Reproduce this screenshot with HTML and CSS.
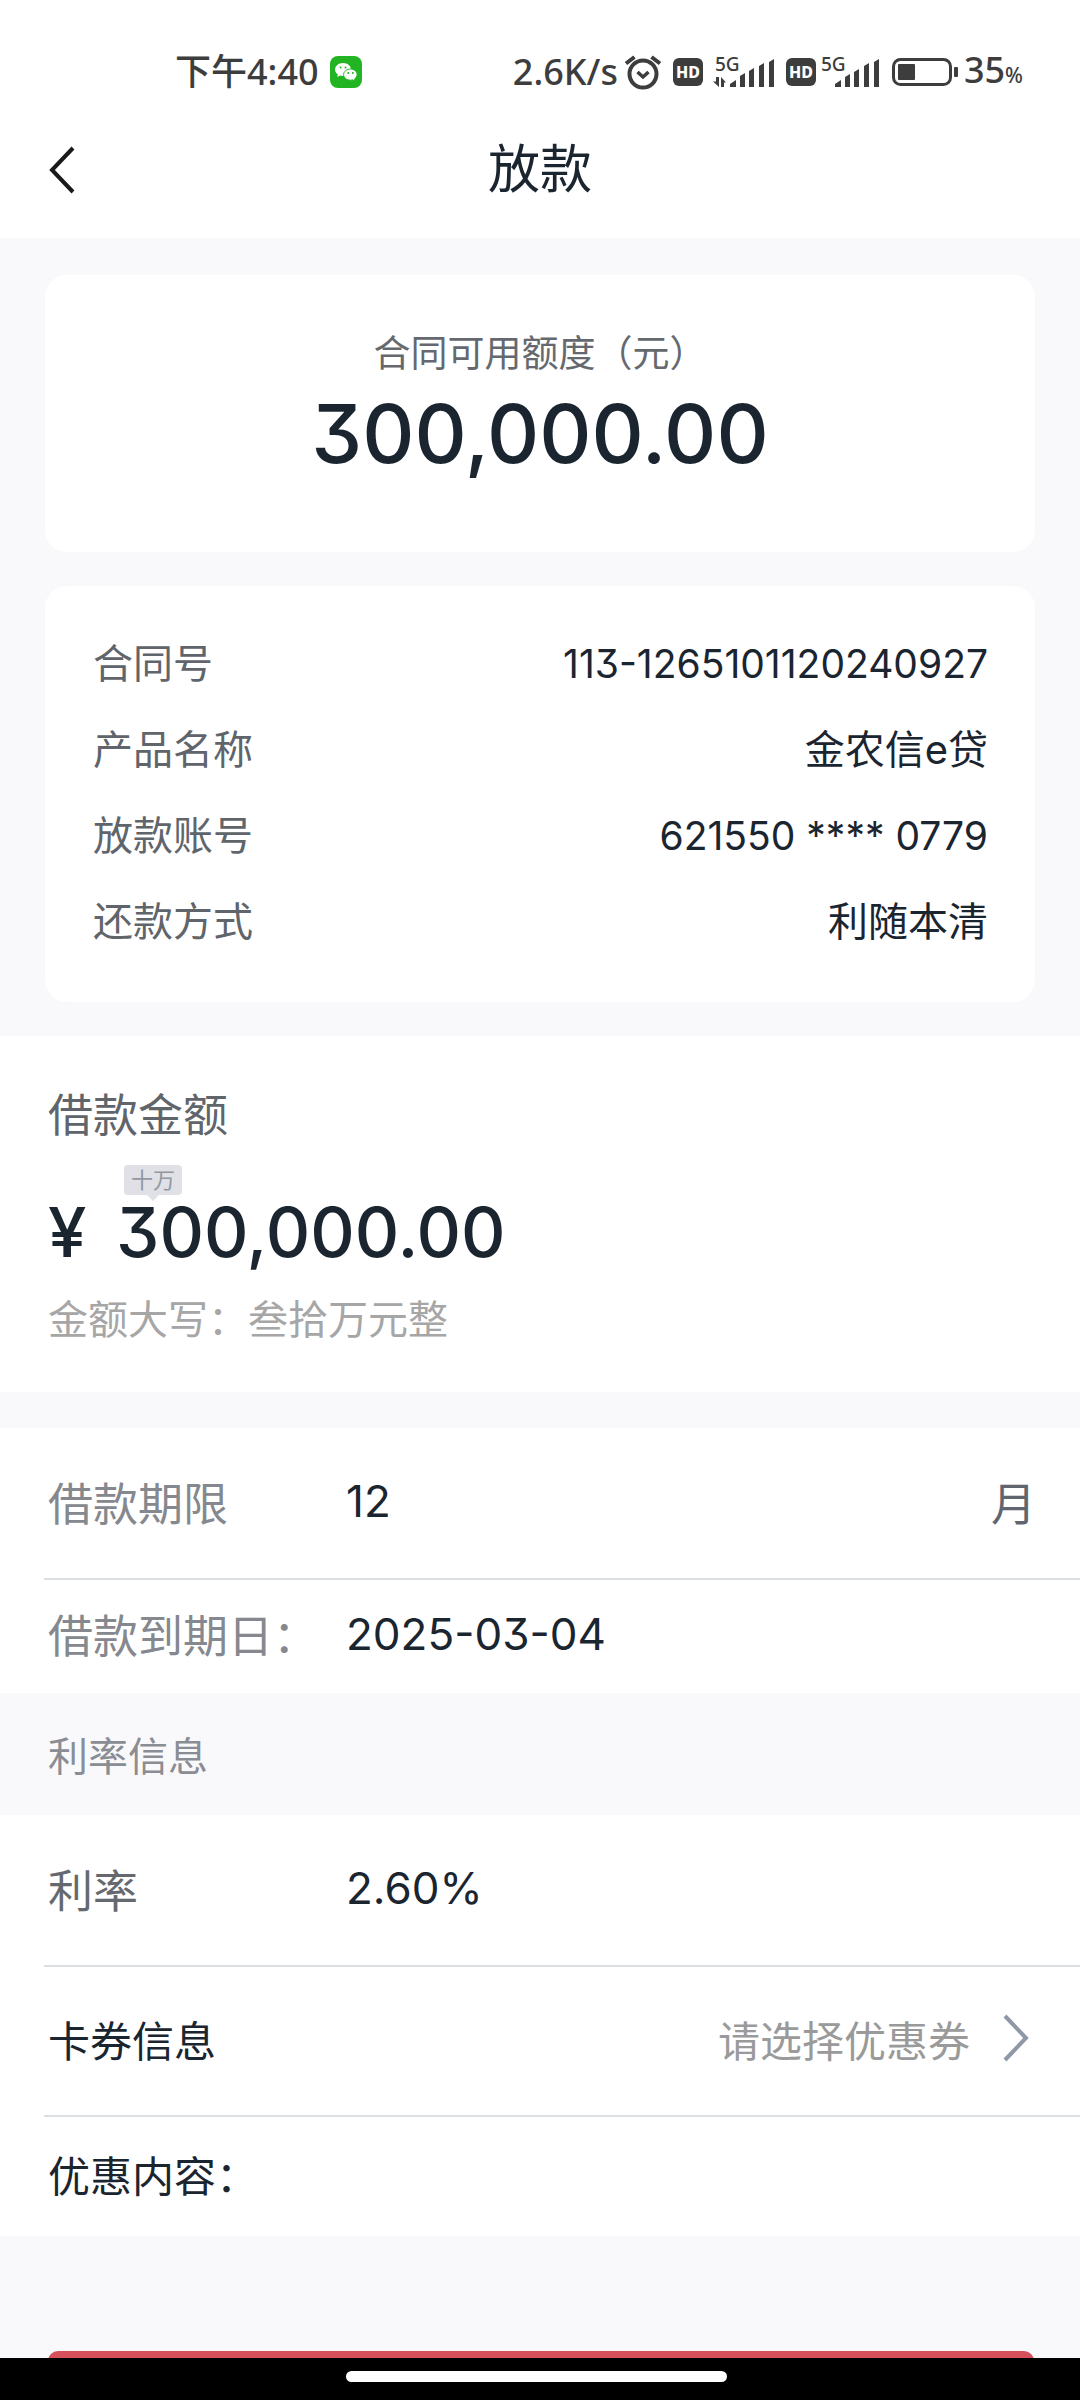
FILE: index.html
```html
<!DOCTYPE html>
<html lang="zh-CN">
<head>
    <meta charset="UTF-8">
    <meta name="viewport" content="width=device-width, initial-scale=1.0">
    <title>放款</title>
    <link rel="stylesheet" href="styles.css">
</head>
<body>
    <div class="status-bar">
        <div class="status-left">
            <span>下午4:40</span>
            <svg class="wechat" width="32" height="32" viewBox="0 0 32 32">
                <rect width="32" height="32" rx="8" fill="#22b422"/>
                <path d="M13 7C8.600 7 5 9.900 5 13.600c0 2 1.100 3.800 2.900 5l-.7 2.400 2.800-1.400c1 .3 2 .4 3 .4 4.400 0 8-2.900 8-6.500S17.400 7 13 7z" fill="#fff"/>
                <path d="M20.500 13c-3.800 0-6.900 2.500-6.900 5.600s3.100 5.600 6.900 5.600c.8 0 1.600-.1 2.300-.3l2.300 1.200-.6-2c1.600-1.100 2.600-2.700 2.600-4.500 0-3.100-3-5.600-6.600-5.600z" fill="#fff" stroke="#22b422"/>
                <g fill="#22b422"><circle cx="10.500" cy="11.500" r="1"/><circle cx="15.500" cy="11.500" r="1"/><circle cx="18.300" cy="17" r="1"/><circle cx="22.800" cy="17" r="1"/></g>
            </svg>
        </div>
        <div class="status-right">
            <span>2.6K/s</span>
            <svg class="alarm" width="38" height="36" viewBox="0 0 38 36" fill="none" stroke="#3d3d3d" stroke-width="4">
                <circle cx="19" cy="20" r="13.500"/>
                <path d="M13.500 18l5.500 5 5.500-5" stroke-width="3.500"/>
                <path d="M2 9.500L10.500 3M36 9.500L27.500 3"/>
            </svg>
            <span class="hd">HD</span>
            <svg class="signal" width="62" height="50" viewBox="0 -8 62 50">
                <text x="2" y="16" class="net">5G</text>
                <path d="M3 22h3v10L0 26.500h3zM8 32V22l5 5.500h-2V32zM17 32v-3l6-4v7zM27 32V21l5-3v14zM36 32V16l5-3v19zM46 32V11l5-3v24zM56 32V7l5-3v28z" fill="#3d3d3d"/>
            </svg>
            <span class="hd">HD</span>
            <svg class="signal second" width="60" height="50" viewBox="0 -8 60 50">
                <text x="1" y="16" class="net">5G</text>
                <path d="M15 32v-3l6-4v7zM25 32V22l5-3v13zM34 32V17l5-3v18zM44 32V11l5-3v24zM54 32V7l5-3v28z" fill="#3d3d3d"/>
            </svg>
            <svg class="battery" width="66" height="30" viewBox="0 0 66 30">
                <rect x="1.500" y="2.500" width="57" height="25" rx="7" fill="none" stroke="#3d3d3d" stroke-width="3"/>
                <rect x="6" y="7" width="17" height="16" rx="1" fill="#3d3d3d"/>
                <rect x="62" y="10" width="4" height="10" rx="1" fill="#3d3d3d"/>
            </svg>
            <span class="percent">35<small>%</small></span>
        </div>
    </div>

    <header class="header">
        <button class="back" type="button" aria-label="返回">
            <svg width="28" height="48" viewBox="0 0 28 48" fill="none" stroke="#1a1a1a" stroke-width="4">
                <path d="M25 2L4 24l21 22"/>
            </svg>
        </button>
        <h1>放款</h1>
    </header>

    <main class="content">
        <section class="card quota">
            <p>合同可用额度（元）</p>
            <strong>300,000.00</strong>
        </section>

        <dl class="card info">
            <div><dt>合同号</dt><dd>113-1265101120240927</dd></div>
            <div><dt>产品名称</dt><dd class="zh">金农信e贷</dd></div>
            <div><dt>放款账号</dt><dd>621550 **** 0779</dd></div>
            <div><dt>还款方式</dt><dd class="zh">利随本清</dd></div>
        </dl>

        <section class="panel amount">
            <label for="amount">借款金额</label>
            <div class="amount-row">
                <span class="yen">¥</span>
                <div class="amount-field">
                    <span class="unit-tip">十万</span>
                    <input id="amount" type="text" value="300,000.00">
                </div>
            </div>
            <p>金额大写：叁拾万元整</p>
        </section>

        <section class="panel term">
            <div class="row">
                <label for="term">借款期限</label>
                <input id="term" type="text" value="12">
                <span class="suffix">月</span>
            </div>
            <div class="row short">
                <span class="name">借款到期日：</span>
                <span class="value">2025-03-04</span>
            </div>
        </section>

        <h2>利率信息</h2>

        <section class="panel">
            <div class="row">
                <span class="name dim">利率</span>
                <span class="value">2.60%</span>
            </div>
            <button class="row coupon" type="button">
                <span>卡券信息</span>
                <span class="hint">请选择优惠券</span>
                <svg width="28" height="48" viewBox="0 0 28 48" fill="none" stroke="#8e98a6" stroke-width="4">
                    <path d="M3 2l21 22L3 46"/>
                </svg>
            </button>
            <div class="row short benefit">优惠内容：</div>
        </section>

        <button class="submit" type="button" aria-label="下一步"></button>
    </main>

    <div class="nav-bar"><span></span></div>
</body>
</html>
```
FILE: styles.css
```css
* {
    box-sizing: border-box;
}

body {
    margin: 0;
    height: 100vh;
    display: flex;
    flex-direction: column;
    font-family: Inter, "Noto Sans CJK SC", sans-serif;
    font-size: 40px;
    font-feature-settings: "cv09";
    color: #1a2530;
    background-color: #f9f9fb;
}

h1, h2, p, dl, dd {
    margin: 0;
    font-weight: 400;
}

button, input {
    font: inherit;
    font-feature-settings: inherit;
    color: inherit;
    border: none;
    background: none;
    padding: 0;
}

svg {
    display: block;
    flex: none;
}

/* status bar */
.status-bar {
    display: flex;
    justify-content: space-between;
    height: 104px;
    padding: 40px 57px 0 175px;
    background-color: #fff;
    color: #3d3d3d;
    font-family: "Noto Sans", "Noto Sans CJK SC", sans-serif;
    font-size: 36px;
    font-weight: 500;
    line-height: 64px;
}

.status-left, .status-right {
    display: flex;
    align-items: center;
}

.status-left {
    gap: 11px;
}

.alarm {
    margin-left: 6px;
}

.hd {
    width: 30px;
    height: 28px;
    margin-left: 11px;
    border-radius: 6px;
    background-color: #3d3d3d;
    color: #fff;
    font-size: 16px;
    font-weight: 800;
    line-height: 28px;
    text-align: center;
}

.signal {
    margin-left: 10px;
}

.signal.second {
    margin-left: 4px;
}

.net {
    font-size: 19px;
    fill: #3d3d3d;
}

.battery {
    margin-left: 12px;
}

.percent {
    margin-left: 6px;
}

.percent small {
    font-size: 21px;
}

/* title bar */
.header {
    display: grid;
    grid-template-columns: 80px 1fr 80px;
    align-items: center;
    height: 134px;
    padding: 0 48px 2px;
    background-color: #fff;
}

.header h1 {
    font-size: 52px;
    line-height: 72px;
    text-align: center;
}

.content {
    flex: 1;
    min-height: 0;
    overflow: hidden;
    display: flex;
    flex-direction: column;
}

.content > * {
    flex: none;
}

.card {
    margin: 0 45px;
    border-radius: 22px;
    background-color: #fff;
}

.quota {
    margin-top: 37px;
    padding: 54px 0 62px;
    text-align: center;
}

.quota p {
    color: #65696f;
    font-size: 37px;
    line-height: 50px;
}

.quota strong {
    display: block;
    font-size: 81px;
    font-weight: 500;
    line-height: 111px;
}

.info {
    margin-top: 34px;
    padding: 35px 47px 37px 48px;
}

.info div {
    display: flex;
    justify-content: space-between;
    line-height: 86px;
}

.info dt {
    color: #60656b;
}

.info dd {
    font-size: 39px;
}

.info .zh {
    font-size: 40px;
}

.panel {
    background-color: #fff;
}

/* loan amount */
.amount {
    margin-top: 34px;
    padding: 48px 48px 42px;
    color: #60656b;
}

.amount label {
    display: block;
    font-size: 45px;
    line-height: 64px;
}

.amount-row {
    display: flex;
    align-items: center;
    gap: 28px;
    margin-top: 42px;
    color: #1a2530;
    font-weight: 500;
    line-height: 84px;
}

.yen {
    width: 40px;
    font-size: 69px;
}

.amount-field {
    position: relative;
    flex: 1;
}

.amount-field input {
    display: block;
    width: 100%;
    height: 84px;
    font-size: 69px;
}

.unit-tip {
    position: absolute;
    top: -25px;
    left: 8px;
    padding: 0 7px;
    border-radius: 4px;
    background-color: #dfe1e7;
    color: #9297a0;
    font-size: 22px;
    font-weight: 400;
    line-height: 30px;
}

.unit-tip::after {
    content: "";
    position: absolute;
    top: 30px;
    left: 50%;
    margin-left: -6px;
    border: 6px solid transparent;
    border-top-color: #dfe1e7;
    border-bottom: none;
}

.amount p {
    margin-top: 16px;
    color: #a6a6a6;
    line-height: 60px;
}

/* form rows */
.term {
    margin-top: 36px;
}

.row {
    display: flex;
    align-items: center;
    width: 100%;
    height: 150px;
    padding: 0 44px 4px 48px;
    font-size: 45px;
    text-align: left;
}

.row + .row {
    position: relative;
}

.row + .row::before {
    content: "";
    position: absolute;
    top: 0;
    left: 44px;
    right: 0;
    border-top: 2px solid #dcdfe1;
}

.row.short {
    height: 115px;
}

.row label, .name {
    width: 298px;
    color: #85888e;
}

.row input {
    flex: 1;
    min-width: 0;
}

.row input, .value {
    font-size: 44px;
}

.suffix {
    color: #5f666f;
}

.row .dim {
    color: #65696f;
}

h2 {
    padding: 6px 0 0 48px;
    color: #8a8d93;
    font-size: 40px;
    line-height: 116px;
}

.row.coupon {
    gap: 32px;
    padding-right: 50px;
    font-size: 42px;
}

.hint {
    margin-left: auto;
    color: #9a9a9a;
}

.row.benefit {
    height: 121px;
    font-size: 42px;
}

.submit {
    height: 132px;
    margin: 115px 46px 0 48px;
    border-radius: 10px;
    background-color: #d6505c;
}

/* system navigation bar */
.nav-bar {
    display: flex;
    justify-content: center;
    height: 42px;
    padding: 13px 8px 0 0;
    background-color: #000;
}

.nav-bar span {
    width: 381px;
    height: 11px;
    border-radius: 6px;
    background-color: #fff;
}
```
